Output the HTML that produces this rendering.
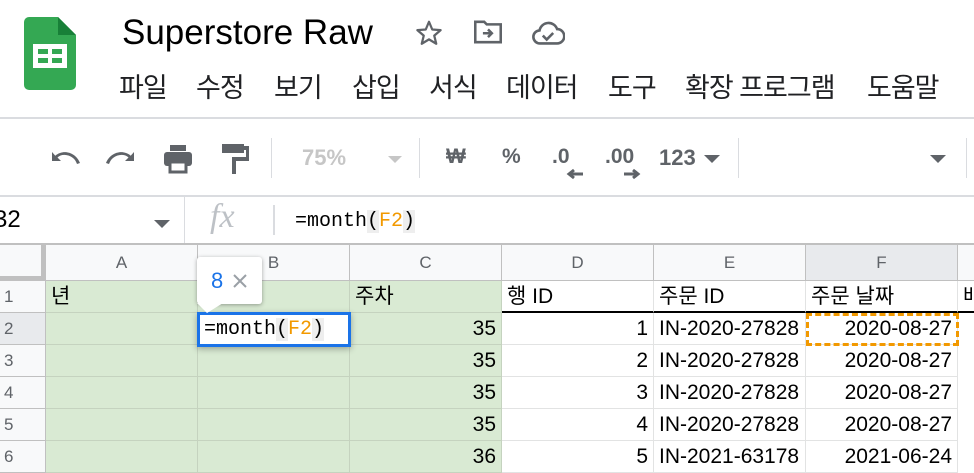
<!DOCTYPE html>
<html><head><meta charset="utf-8"><style>
*{margin:0;padding:0;box-sizing:border-box}
body{width:974px;height:458px;overflow:hidden;background:#fff;font-family:"Liberation Sans","Noto Sans CJK KR",sans-serif;position:relative}
.a{position:absolute}
.menu span{position:absolute;top:66px;font-size:27px;color:#202124;white-space:nowrap;letter-spacing:-1px}
.tb{color:#5f6368;font-size:21px;font-weight:bold}
.c{position:absolute;height:32px;border-right:1px solid #e2e3e3;border-bottom:1px solid #e2e3e3;font-size:21px;line-height:31px;padding:0 5px;color:#000;white-space:nowrap;overflow:hidden}
.g{background:#d9ead3;border-color:#c5d3bf}
.r{text-align:right}
.h{position:absolute;top:245px;height:36px;background:#f8f9fa;border-right:1px solid #c0c0c0;border-bottom:1px solid #c0c0c0;text-align:center;line-height:36px;font-size:17px;color:#5f6368}
.rh{position:absolute;left:0;width:46px;height:32px;background:#f8f9fa;border-right:1px solid #c0c0c0;border-bottom:1px solid #c0c0c0;font-size:17px;color:#5f6368;line-height:32px;padding-left:4px}
</style></head><body>
<svg class="a" style="left:24px;top:17px" width="52" height="73" viewBox="0 0 52 73"><path d="M5 0H34L52 18V68a5 5 0 0 1-5 5H5a5 5 0 0 1-5-5V5a5 5 0 0 1 5-5z" fill="#34a853"/><path d="M34 0L52 18H34z" fill="#188038"/><rect x="9" y="27" width="34" height="24" fill="#fff"/><rect x="14" y="32" width="10" height="5" fill="#34a853"/><rect x="28" y="32" width="10" height="5" fill="#34a853"/><rect x="14" y="41" width="10" height="5" fill="#34a853"/><rect x="28" y="41" width="10" height="5" fill="#34a853"/></svg>
<div class="a" style="left:122px;top:13px;font-size:35px;color:#000">Superstore Raw</div>
<svg class="a" style="left:413px;top:18px" width="32" height="30" viewBox="0 0 24 24"><path d="M12 3l2.6 6.2 6.7.5-5.1 4.4 1.6 6.5L12 17.1l-5.8 3.5 1.6-6.5L2.7 9.7l6.7-.5z" fill="none" stroke="#5f6368" stroke-width="1.8" stroke-linejoin="round"/></svg>
<svg class="a" style="left:472px;top:18px" width="32" height="28" viewBox="0 0 24 22"><path d="M2 3h7l2 2h11v14H2z" fill="none" stroke="#5f6368" stroke-width="2"/><path d="M8 12h7M12 9l3 3-3 3" fill="none" stroke="#5f6368" stroke-width="2"/></svg>
<svg class="a" style="left:531px;top:20px" width="34" height="26" viewBox="0 0 26 20"><path d="M7 18a5 5 0 0 1-.5-10A7 7 0 0 1 20 7a5.5 5.5 0 0 1 0 11z" fill="none" stroke="#5f6368" stroke-width="2"/><path d="M9 12l3 3 5-5" fill="none" stroke="#5f6368" stroke-width="2"/></svg>
<div class="menu"><span style="left:119px">파일</span><span style="left:196px">수정</span><span style="left:274px">보기</span><span style="left:352px">삽입</span><span style="left:429px">서식</span><span style="left:506px">데이터</span><span style="left:608px">도구</span><span style="left:685px">확장 프로그램</span><span style="left:867px">도움말</span></div>
<div class="a" style="left:0;top:117px;width:974px;height:2px;background:#dadce0"></div>
<svg class="a" style="left:46px;top:146px" width="38" height="24" viewBox="0 0 38 24"><path d="M6 6v9h9l-3.5-3.5C15 8 22 8 27 12c2 1.5 3 3.5 4 6l3-1C31 9 22 4 14 7c-2 .7-3.5 1.6-4.7 2.7z" fill="#5f6368"/></svg>
<svg class="a" style="left:102px;top:146px" width="38" height="24" viewBox="0 0 38 24"><g transform="translate(38,0) scale(-1,1)"><path d="M6 6v9h9l-3.5-3.5C15 8 22 8 27 12c2 1.5 3 3.5 4 6l3-1C31 9 22 4 14 7c-2 .7-3.5 1.6-4.7 2.7z" fill="#5f6368"/></g></svg>
<svg class="a" style="left:162px;top:144px" width="32" height="30" viewBox="0 0 30 30"><rect x="7" y="1" width="16" height="6" fill="#5f6368"/><rect x="1" y="8" width="28" height="14" rx="3" fill="#5f6368"/><rect x="7" y="18" width="16" height="10" fill="#fff" stroke="#5f6368" stroke-width="3"/></svg>
<svg class="a" style="left:221px;top:143px" width="28" height="32" viewBox="0 0 28 32"><rect x="1" y="1" width="22" height="9" fill="#5f6368"/><path d="M23 5h4v11H13v15" fill="none" stroke="#5f6368" stroke-width="4"/></svg>
<div class="a" style="left:271px;top:138px;width:1px;height:40px;background:#dadce0"></div>
<div class="a tb" style="left:302px;top:145px;color:#c6c6c6;font-size:22px">75%</div>
<svg class="a" style="left:388px;top:156px" width="14" height="8"><path d="M0 0h14L7 7z" fill="#c6c6c6"/></svg>
<div class="a" style="left:419px;top:138px;width:1px;height:40px;background:#dadce0"></div>
<div class="a tb" style="left:446px;top:145px">₩</div>
<div class="a tb" style="left:502px;top:145px">%</div>
<div class="a tb" style="left:552px;top:145px">.0</div>
<svg class="a" style="left:565px;top:168px" width="18" height="12"><path d="M18 6H5M9 2L4 6l5 4" fill="none" stroke="#5f6368" stroke-width="3"/></svg>
<div class="a tb" style="left:605px;top:145px">.00</div>
<svg class="a" style="left:624px;top:168px" width="18" height="12"><path d="M0 6h13M9 2l5 4-5 4" fill="none" stroke="#5f6368" stroke-width="3"/></svg>
<div class="a tb" style="left:659px;top:145px;font-size:22px">123</div>
<svg class="a" style="left:704px;top:155px" width="16" height="9"><path d="M0 0h16L8 8z" fill="#5f6368"/></svg>
<div class="a" style="left:738px;top:138px;width:1px;height:40px;background:#dadce0"></div>
<svg class="a" style="left:930px;top:155px" width="16" height="9"><path d="M0 0h16L8 8z" fill="#5f6368"/></svg>
<div class="a" style="left:966px;top:138px;width:1px;height:40px;background:#dadce0"></div>
<div class="a" style="left:0;top:195px;width:974px;height:2px;background:#dadce0"></div>
<div class="a" style="left:-6px;top:206px;font-size:24px;color:#000">32</div>
<svg class="a" style="left:154px;top:220px" width="16" height="9"><path d="M0 0h16L8 8z" fill="#5f6368"/></svg>
<div class="a" style="left:184px;top:197px;width:1px;height:47px;background:#dadce0"></div>
<div class="a" style="left:210px;top:198px;font-family:'Liberation Serif',serif;font-style:italic;font-size:34px;color:#bdc1c6">fx</div>
<div class="a" style="left:273px;top:205px;width:2px;height:30px;background:#dadce0"></div>
<div class="a" style="left:295px;top:210px;font-family:'Liberation Mono',monospace;font-size:20px;color:#000">=month<span style="background:#eee">(</span><span style="color:#f29900">F2</span><span style="background:#eee">)</span></div>
<div class="a" style="left:0;top:243px;width:974px;height:2px;background:#c0c0c0"></div>
<div class="h" style="left:0;width:46px;border-right:5px solid #c0c0c0;border-bottom:5px solid #c0c0c0"></div>
<div class="h" style="left:46px;width:152px">A</div>
<div class="h" style="left:198px;width:152px">B</div>
<div class="h" style="left:350px;width:152px">C</div>
<div class="h" style="left:502px;width:152px">D</div>
<div class="h" style="left:654px;width:152px">E</div>
<div class="h" style="left:806px;width:152px;background:#e8eaed">F</div>
<div class="h" style="left:958px;width:20px"></div>
<div class="rh" style="top:281px">1</div>
<div class="rh" style="top:313px;background:#e8eaed">2</div>
<div class="rh" style="top:345px">3</div>
<div class="rh" style="top:377px">4</div>
<div class="rh" style="top:409px">5</div>
<div class="rh" style="top:441px">6</div>
<div class="c g" style="left:46px;top:281px;width:152px">년</div>
<div class="c g" style="left:198px;top:281px;width:152px"></div>
<div class="c g" style="left:350px;top:281px;width:152px">주차</div>
<div class="c" style="left:502px;top:281px;width:152px;border-bottom:2px solid #000">행 ID</div>
<div class="c" style="left:654px;top:281px;width:152px;border-bottom:2px solid #000">주문 ID</div>
<div class="c" style="left:806px;top:281px;width:152px;border-bottom:2px solid #000">주문 날짜</div>
<div class="c" style="left:958px;top:281px;width:30px;border-bottom:2px solid #000">배</div>
<div class="c g" style="left:46px;top:313px;width:152px"></div><div class="c g" style="left:198px;top:313px;width:152px"></div><div class="c g r" style="left:350px;top:313px;width:152px">35</div><div class="c r" style="left:502px;top:313px;width:152px">1</div><div class="c" style="left:654px;top:313px;width:152px">IN-2020-27828</div><div class="c r" style="left:806px;top:313px;width:152px">2020-08-27</div>
<div class="c g" style="left:46px;top:345px;width:152px"></div><div class="c g" style="left:198px;top:345px;width:152px"></div><div class="c g r" style="left:350px;top:345px;width:152px">35</div><div class="c r" style="left:502px;top:345px;width:152px">2</div><div class="c" style="left:654px;top:345px;width:152px">IN-2020-27828</div><div class="c r" style="left:806px;top:345px;width:152px">2020-08-27</div>
<div class="c g" style="left:46px;top:377px;width:152px"></div><div class="c g" style="left:198px;top:377px;width:152px"></div><div class="c g r" style="left:350px;top:377px;width:152px">35</div><div class="c r" style="left:502px;top:377px;width:152px">3</div><div class="c" style="left:654px;top:377px;width:152px">IN-2020-27828</div><div class="c r" style="left:806px;top:377px;width:152px">2020-08-27</div>
<div class="c g" style="left:46px;top:409px;width:152px"></div><div class="c g" style="left:198px;top:409px;width:152px"></div><div class="c g r" style="left:350px;top:409px;width:152px">35</div><div class="c r" style="left:502px;top:409px;width:152px">4</div><div class="c" style="left:654px;top:409px;width:152px">IN-2020-27828</div><div class="c r" style="left:806px;top:409px;width:152px">2020-08-27</div>
<div class="c g" style="left:46px;top:441px;width:152px"></div><div class="c g" style="left:198px;top:441px;width:152px"></div><div class="c g r" style="left:350px;top:441px;width:152px">36</div><div class="c r" style="left:502px;top:441px;width:152px">5</div><div class="c" style="left:654px;top:441px;width:152px">IN-2021-63178</div><div class="c r" style="left:806px;top:441px;width:152px">2021-06-24</div>
<div class="a" style="left:806px;top:313px;width:153px;height:33px;border:3px dashed #f29900"></div>
<div class="a" style="left:197px;top:312px;width:154px;height:35px;border:3px solid #1a73e8;background:#fff;box-shadow:0 2px 6px rgba(0,0,0,.3);font-family:'Liberation Mono',monospace;font-size:20px;line-height:29px;padding-left:4px;color:#000;white-space:nowrap">=month<span style="background:#eee">(</span><span style="color:#f29900">F2</span><span style="background:#eee">)</span></div>
<div class="a" style="left:197px;top:257px;width:65px;height:47px;background:#fff;border-radius:3px;box-shadow:0 1px 4px rgba(0,0,0,.35)"></div>
<svg class="a" style="left:197px;top:303px" width="30" height="12"><path d="M0 0L10 10 26 0z" fill="#fff"/></svg>
<div class="a" style="left:211px;top:268px;font-size:22px;color:#1a73e8">8</div>
<svg class="a" style="left:233px;top:274px" width="14" height="14"><path d="M1 1l12 12M13 1L1 13" stroke="#9aa0a6" stroke-width="2"/></svg>
</body></html>
